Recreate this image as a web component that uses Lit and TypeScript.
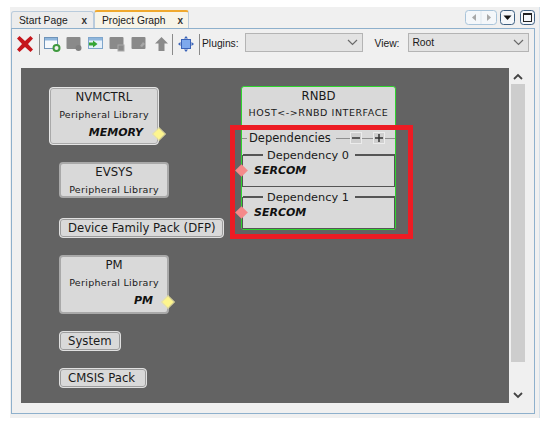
import { LitElement, html, css, svg } from "lit";
import { customElement } from "lit/decorators.js";

type GraphNode = {
  title: string;
  sub?: string;
  cap?: string;
  left: number;
  top: number;
  width: number;
  height: number;
};

const NODES: GraphNode[] = [
  { title: "NVMCTRL", sub: "Peripheral Library", cap: "MEMORY", left: 28, top: 19, width: 110, height: 58 },
  { title: "EVSYS", sub: "Peripheral Library", left: 38, top: 94, width: 110, height: 36 },
  { title: "Device Family Pack (DFP)", left: 38, top: 150, width: 165, height: 20 },
  { title: "PM", sub: "Peripheral Library", cap: "PM", left: 38, top: 187, width: 110, height: 59 },
  { title: "System", left: 38, top: 263, width: 62, height: 20 },
  { title: "CMSIS Pack", left: 38, top: 300, width: 88, height: 20 },
];

const grayIcon = (extra: unknown) => svg`<svg width="16" height="16" viewBox="0 0 16 16">
  <rect x="0.5" y="1" width="14" height="12" rx="1" fill="#8a8a8a" />${extra}</svg>`;

@customElement("app-root")
export class AppRoot extends LitElement {
  static styles = css`
    :host {
      display: block;
      width: 548px;
      height: 425px;
      background: #fff;
      overflow: hidden;
      font-family: "DejaVu Sans", sans-serif;
      color: #1a1a1a;
    }
    .window {
      margin: 7px 8px 0 10px;
      height: 411px;
      background: #f0f0f0;
      border-right: 1px solid #d4e0ea;
      display: flex;
      flex-direction: column;
      box-sizing: border-box;
      padding-right: 4px;
    }
    .tabbar {
      height: 21px;
      flex: none;
      display: flex;
      align-items: flex-end;
      padding-left: 1px;
    }
    .tab {
      height: 17px;
      display: flex;
      align-items: center;
      justify-content: space-between;
      box-sizing: border-box;
      border: 1px solid #b9cbdc;
      border-bottom: none;
      border-radius: 3px 3px 0 0;
      font: 10.3px "Liberation Sans", sans-serif;
      background: #ececec;
      padding: 0 6px 0 7px;
      width: 83px;
      white-space: nowrap;
    }
    .tab.active {
      height: 18px;
      width: 95px;
      background: #f7f4e8;
      border-top: 2px solid #f0a92e;
      border-left-color: #b9cbdc;
      padding: 0 5px 0 7px;
    }
    .tab b {
      font: bold 10px "Liberation Sans", sans-serif;
      color: #333;
    }
    .controls {
      margin-left: auto;
      display: flex;
      gap: 3px;
      align-self: flex-start;
      margin-top: 3px;
    }
    .controls svg:last-child {
      margin-left: 2px;
    }
    .panel {
      flex: 1;
      border: 1px solid #8eb0cc;
      margin: 0 0 4px 1px;
      display: flex;
      flex-direction: column;
      min-height: 0;
      box-sizing: border-box;
    }
    .toolbar {
      height: 39px;
      flex: none;
      display: flex;
      align-items: flex-start;
      padding: 4px 5px 0 4px;
      box-sizing: border-box;
      font: 10.3px "Liberation Sans", sans-serif;
    }
    .tool {
      height: 18px;
      margin-top: 1px;
      display: flex;
      align-items: center;
      white-space: nowrap;
    }
    .tools {
      display: flex;
      align-items: center;
      height: 18px;
      margin-top: 2px;
    }
    .sep {
      width: 1px;
      height: 21px;
      background: #8a8a8a;
      flex: none;
    }
    .select {
      height: 19px;
      box-sizing: border-box;
      background: #e3e3e3;
      border: 1px solid #b4b4b4;
      display: flex;
      align-items: center;
      justify-content: flex-end;
      padding: 0 4px 0 3px;
    }
    .select span {
      margin-right: auto;
    }
    .body {
      flex: 1;
      display: flex;
      min-height: 0;
      padding: 0 7px 10px 9px;
    }
    .canvas {
      width: 488px;
      background: #636363;
      position: relative;
      flex: none;
    }
    .scroll {
      width: 18px;
      display: flex;
      flex-direction: column;
      align-items: center;
    }
    .arrow {
      height: 16px;
      display: flex;
      align-items: center;
      justify-content: center;
      flex: none;
    }
    .thumb {
      width: 14px;
      height: 278px;
      background: #cdcdcd;
      flex: none;
    }
    .spacer {
      flex: 1;
    }
    .node {
      position: absolute;
      box-sizing: border-box;
      background: #d9d9d9;
      border: 2px solid #a9a9a9;
      border-radius: 4px;
      font-size: 11.7px;
      display: flex;
      flex-direction: column;
      align-items: center;
    }
    .node.lit {
      border: 1px solid #e6e6e6;
      box-shadow: inset 0 0 0 1px #a9a9a9;
      padding: 1px;
    }
    .node.plain {
      justify-content: center;
      align-items: flex-start;
      padding-left: 8px;
      white-space: nowrap;
      border: 1px solid #e0e0e0;
      box-shadow: inset 0 0 0 1px #9c9c9c;
    }
    .title {
      line-height: 15px;
      margin-top: 1px;
    }
    .sub {
      font-size: 9.5px;
      letter-spacing: 0.3px;
      line-height: 12px;
      margin-top: 4px;
      white-space: nowrap;
    }
    .cap {
      align-self: flex-end;
      margin: 5px 14px 0 0;
      font-size: 11px;
      line-height: 14px;
      font-weight: bold;
      font-style: italic;
      color: #111;
    }
    .diamond {
      position: absolute;
      width: 8px;
      height: 8px;
      transform: rotate(45deg);
      background: #fdf58e;
      right: -5px;
      bottom: 6px;
      outline: 1px solid #e8e2a0;
    }
    .rnbd {
      position: absolute;
      left: 220px;
      top: 18px;
      width: 155px;
      height: 144px;
      box-sizing: border-box;
      background: #d9d9d9;
      border: 1px solid #2fd42f;
      border-radius: 3px;
      display: flex;
      flex-direction: column;
      font-size: 11.7px;
    }
    .rnbd .title {
      text-align: center;
      margin-top: 2px;
    }
    .rnbd .sub {
      text-align: center;
      margin-top: 3px;
      font-size: 9.5px;
      letter-spacing: 0.55px;
    }
    .dephead {
      display: flex;
      align-items: center;
      height: 18px;
      margin-top: 10px;
      font-size: 11.5px;
    }
    .dash {
      height: 1px;
      background: #8f8f8f;
      width: 11px;
      flex: none;
    }
    .dash.a {
      width: 5px;
      margin-right: 2px;
    }
    .dash.b {
      margin-left: 5px;
      width: 14px;
    }
    .dash.c {
      flex: 1;
    }
    .btn {
      width: 12px;
      height: 12px;
      box-sizing: border-box;
      border: 1px solid #ececec;
      background: #cfcfcf;
      display: flex;
      align-items: center;
      justify-content: center;
    }
    .deps {
      margin-top: 8px;
    }
    .dep {
      display: flow-root;
      position: relative;
      padding: 0 0 0 11px;
      height: 32px;
      box-sizing: border-box;
      border: 1px solid #555;
      border-top: none;
      font-size: 11.3px;
    }
    .dep + .dep {
      margin-top: 10px;
    }
    .dep-title {
      display: flex;
      align-items: center;
      margin: -7px -1px 0 -11px;
      height: 14px;
    }
    .dep-title i {
      height: 2px;
      background: #555;
      flex: none;
      width: 20px;
    }
    .dep-title i.rest {
      flex: 1;
    }
    .dep-title span {
      margin: 0 6px 0 4px;
    }
    .dep .cap {
      margin: 2px 0 0 0;
    }
    .diamond.pink {
      background: #f58a8a;
      left: -6px;
      right: auto;
      top: 11px;
      bottom: auto;
      width: 9px;
      height: 9px;
      outline: none;
    }
    .red {
      position: absolute;
      left: 209px;
      top: 57px;
      width: 183px;
      height: 114px;
      box-sizing: border-box;
      border: 5px solid #ed1c24;
    }
  `;

  renderNode(n: GraphNode) {
    const box = `left:${n.left}px;top:${n.top}px;width:${n.width}px;height:${n.height}px`;
    if (!n.sub) {
      return html`<div class="node plain" style=${box}>${n.title}</div>`;
    }
    return html`<div class="node ${n.title === "NVMCTRL" ? "lit" : ""}" style=${box}>
      <div class="title">${n.title}</div>
      <div class="sub">${n.sub}</div>
      ${n.cap ? html`<div class="cap">${n.cap}</div><div class="diamond"></div>` : ""}
    </div>`;
  }

  renderDep(name: string) {
    return html`<div class="dep">
      <div class="dep-title"><i></i><span>${name}</span><i class="rest"></i></div>
      <div class="cap">SERCOM</div>
      <div class="diamond pink"></div>
    </div>`;
  }

  renderTools() {
    return html`<div class="tools">
      <svg width="18" height="18" viewBox="0 0 18 18" style="margin-right:5px">
        <path d="M1 3.5 3.5 1 9 6 14.5 1 17 3.5 12 9 17 14.5 14.5 17 9 12 3.5 17 1 14.5 6 9Z" fill="#c5161c" />
      </svg>
      <div class="sep" style="margin-right:4px"></div>
      <svg width="17" height="16" viewBox="0 0 17 16" style="margin-right:5px">
        <rect x="0.5" y="1.5" width="13" height="11" fill="#f6f9fc" stroke="#6f93b8" />
        <rect x="1" y="2" width="12" height="2.5" fill="#8fb6dc" />
        <circle cx="12.5" cy="12" r="3" fill="#f0f0f0" stroke="#3f9a3f" stroke-width="2" />
      </svg>
      ${grayIcon(svg`<circle cx="12.5" cy="12" r="3" fill="#808080" />`)}
      <svg width="16" height="16" viewBox="0 0 16 16" style="margin-left:6px">
        <rect x="0.5" y="1.5" width="14" height="11" fill="#e6f0fa" stroke="#7fa6cc" />
        <rect x="1" y="2" width="13" height="2.5" fill="#8fb6dc" />
        <path d="M1 6.5H5V4.5L9.5 8 5 11.5V9.5H1Z" fill="#35a535" />
      </svg>
      <span style="width:5px"></span>
      ${grayIcon(svg`<rect x="9" y="9" width="6" height="6" fill="#8a8a8a" stroke="#a8a8a8" />`)}
      <span style="width:6px"></span>
      ${grayIcon(svg`<path d="M9 10 12 6 14 8 11 11Z" fill="#a8a8a8" />`)}
      <svg width="15" height="16" viewBox="0 0 15 16" style="margin:0 3px 0 7px">
        <path d="M7.5 1 14 7.5H10.5V15H4.5V7.5H1Z" fill="#8a8a8a" />
      </svg>
      <div class="sep" style="margin-right:5px"></div>
      <svg width="16" height="16" viewBox="0 0 16 16" style="margin-right:5px">
        <rect x="3.5" y="3.5" width="9" height="9" fill="#7ea9ec" stroke="#3a63b8" />
        <path d="M8 0 10 2.5H6ZM8 16 10 13.5H6ZM0 8 2.5 6V10ZM16 8 13.5 6V10Z" fill="#3a63b8" />
      </svg>
      <div class="sep"></div>
    </div>`;
  }

  render() {
    const chevron = html`<svg width="11" height="7" viewBox="0 0 11 7"><path d="M1 1 5.5 5.5 10 1" fill="none" stroke="#6a6a6a" stroke-width="1.2" /></svg>`;
    return html`<div class="window">
      <div class="tabbar">
        <div class="tab">Start Page<b>x</b></div>
        <div class="tab active">Project Graph<b>x</b></div>
        <div class="controls">
          <svg width="32" height="15" viewBox="0 0 32 15">
            <rect x="0.5" y="0.5" width="31" height="14" rx="3" fill="#f4f7fa" stroke="#a9c4da" />
            <path d="M16 1V14" stroke="#dfe8ef" />
            <path d="M11 4V11L7 7.5Z" fill="#a8a8a8" />
            <path d="M22 4V11L26 7.5Z" fill="#a8a8a8" />
          </svg>
          <svg width="15" height="15" viewBox="0 0 15 15">
            <rect x="0.5" y="0.5" width="14" height="14" rx="3" fill="#f4f7fa" stroke="#3d5f80" />
            <path d="M3.5 5.5H11.5L7.5 10Z" fill="#111" />
          </svg>
          <svg width="15" height="15" viewBox="0 0 15 15">
            <rect x="0.5" y="0.5" width="14" height="14" rx="3" fill="#f4f7fa" stroke="#3d5f80" />
            <rect x="3.5" y="3.5" width="8" height="8" fill="none" stroke="#222" />
            <path d="M3.5 4H11.5" stroke="#222" stroke-width="2" />
          </svg>
        </div>
      </div>
      <div class="panel">
        <div class="toolbar">
          ${this.renderTools()}
          <span class="tool" style="margin-left:2px;width:43px">Plugins:</span>
          <div class="select" style="width:119px">${chevron}</div>
          <span class="tool" style="margin-left:11px;width:34px">View:</span>
          <div class="select" style="width:121px"><span>Root</span>${chevron}</div>
        </div>
        <div class="body">
          <div class="canvas">
            ${NODES.map((n) => this.renderNode(n))}
            <div class="rnbd">
              <div class="title">RNBD</div>
              <div class="sub">HOST&lt;-&gt;RNBD INTERFACE</div>
              <div class="dephead">
                <span class="dash a"></span>
                <span>Dependencies</span>
                <span class="dash b"></span>
                <span class="btn">
                  <svg width="8" height="8" viewBox="0 0 8 8"><path d="M0 4H8" stroke="#333" stroke-width="1.5" /></svg>
                </span>
                <span class="dash"></span>
                <span class="btn">
                  <svg width="8" height="8" viewBox="0 0 8 8"><path d="M0 4H8M4 0V8" stroke="#333" stroke-width="1.5" /></svg>
                </span>
                <span class="dash c"></span>
              </div>
              <div class="deps">
                ${this.renderDep("Dependency 0")}
                ${this.renderDep("Dependency 1")}
              </div>
            </div>
            <div class="red"></div>
          </div>
          <div class="scroll">
            <div class="arrow">
              <svg width="10" height="7" viewBox="0 0 10 7"><path d="M1 6 5 2 9 6" fill="none" stroke="#444" stroke-width="1.8" /></svg>
            </div>
            <div class="thumb"></div>
            <div class="spacer"></div>
            <div class="arrow">
              <svg width="10" height="7" viewBox="0 0 10 7"><path d="M1 1 5 5 9 1" fill="none" stroke="#444" stroke-width="1.8" /></svg>
            </div>
          </div>
        </div>
      </div>
    </div>`;
  }
}
